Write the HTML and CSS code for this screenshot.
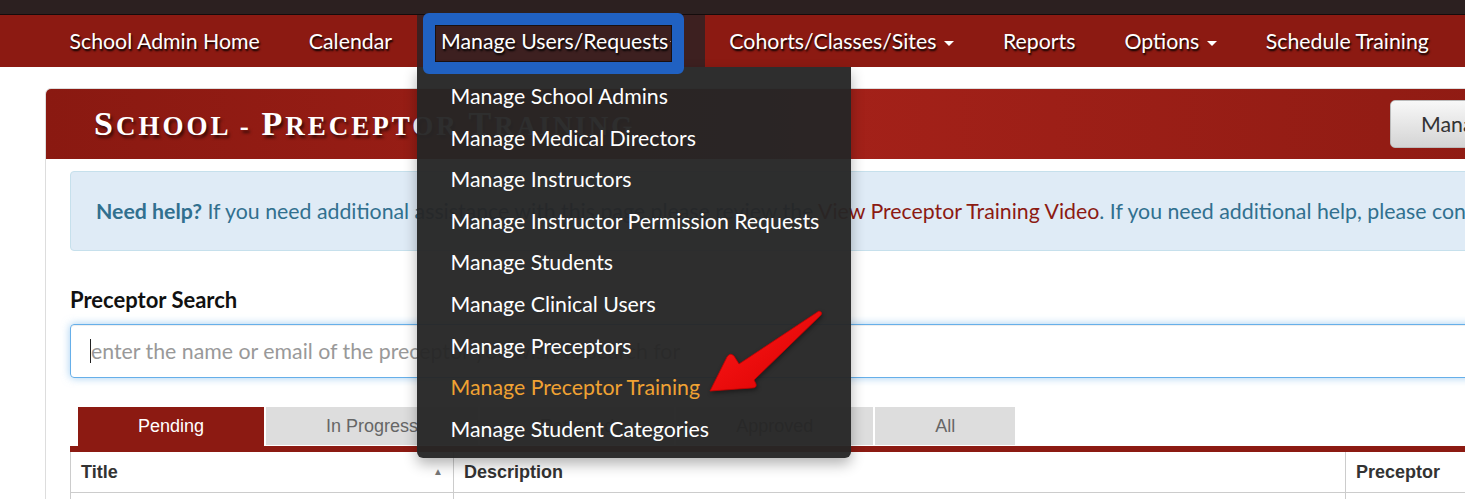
FILE: index.html
```html
<!DOCTYPE html>
<html lang="en">
<head>
    <meta charset="UTF-8">
    <meta name="viewport" content="width=device-width, initial-scale=1.0">
    <title>School - Preceptor Training</title>
    <link rel="stylesheet" href="styles.css">
</head>
<body>
    <div class="topbar"></div>
    <nav class="navbar">
        <ul class="nav">
            <li><a href="#">School Admin Home</a></li>
            <li><a href="#">Calendar</a></li>
            <li class="open">
                <a href="#">Manage Users/Requests<span class="caret"></span></a>
                <ul class="dropdown">
                    <li><a href="#">Manage School Admins</a></li>
                    <li><a href="#">Manage Medical Directors</a></li>
                    <li><a href="#">Manage Instructors</a></li>
                    <li><a href="#">Manage Instructor Permission Requests</a></li>
                    <li><a href="#">Manage Students</a></li>
                    <li><a href="#">Manage Clinical Users</a></li>
                    <li><a href="#">Manage Preceptors</a></li>
                    <li class="current"><a href="#">Manage Preceptor Training</a></li>
                    <li><a href="#">Manage Student Categories</a></li>
                </ul>
            </li>
            <li><a href="#">Cohorts/Classes/Sites <span class="caret"></span></a></li>
            <li><a href="#">Reports</a></li>
            <li><a href="#">Options <span class="caret"></span></a></li>
            <li><a href="#">Schedule Training</a></li>
        </ul>
    </nav>

    <div class="page">
        <div class="panel">
            <div class="panel-head">
                <h1><span class="initial">S</span>chool - <span class="initial">P</span>receptor <span class="initial">T</span>raining</h1>
                <button class="btn">Manage Training Videos</button>
            </div>
            <div class="panel-body">
                <div class="alert">
                    <p><b>Need help?</b> If you need additional assistance with this page please review the <a href="#">View Preceptor Training Video</a>. If you need additional help, please contact support.</p>
                </div>

                <label class="search-label">Preceptor Search</label>
                <div class="search-box">
                    <span class="cursor"></span>
                    <span class="placeholder">enter the name or email of the preceptor you wish to search for</span>
                </div>

                <div class="tabs">
                    <a class="tab active" href="#">Pending</a>
                    <a class="tab" href="#">In Progress</a>
                    <a class="tab" href="#">Returned</a>
                    <a class="tab" href="#">Approved</a>
                    <a class="tab" href="#">All</a>
                </div>

                <table class="grid">
                    <thead>
                        <tr>
                            <th class="col-title">Title <span class="sort">&#9650;</span></th>
                            <th class="col-desc">Description</th>
                            <th>Preceptor</th>
                        </tr>
                    </thead>
                    <tbody>
                        <tr><td></td><td></td><td></td></tr>
                    </tbody>
                </table>
            </div>
        </div>
    </div>

    <!-- callouts -->
    <div class="callout-box"></div>
    <svg class="callout-arrow" width="130" height="100" viewBox="700 300 130 100">
        <defs>
            <linearGradient id="arrowFill" x1="0" y1="0" x2="1" y2="1">
                <stop offset="0" stop-color="#ff1a1a"/>
                <stop offset="1" stop-color="#d80000"/>
            </linearGradient>
        </defs>
        <path d="M819 311 Q823 312 821 315 L754 380 L756 384 Q757 388 752 388 L710 391 L727 357 Q730 352 734 356 L739 364 Z" fill="url(#arrowFill)" stroke="#c40000" stroke-width="0.8" stroke-linejoin="round"/>
    </svg>
</body>
</html>
```

FILE: styles.css
```css
html, body {
    width: 1465px;
    height: 499px;
    overflow: hidden;
}
body {
    margin: 0;
    background-color: #fff;
    font-family: Lato, "Open Sans", sans-serif;
    position: relative;
}
ul {
    list-style: none;
    margin: 0;
    padding: 0;
}
a {
    text-decoration: none;
}

.topbar {
    height: 14px;
    background-color: #2c2020;
    border-bottom: 1px solid #140c0c;
}

/* main menu */
.navbar {
    height: 52px;
    background-color: #8c1a12;
    position: relative;
    z-index: 10;
}
.nav {
    display: flex;
    padding-left: 45px;
    height: 100%;
}
.nav > li {
    position: relative;
}
.nav > li > a {
    display: block;
    line-height: 52px;
    padding: 0 24.5px;
    color: #fff;
    font-size: 21.3px;
    text-shadow: 1px 2px 2px #000;
    white-space: nowrap;
}
.nav > li.open {
    background-color: #3d2020;
}
.caret {
    display: inline-block;
    width: 0;
    height: 0;
    margin-left: 2px;
    vertical-align: middle;
    border-top: 5px solid #fff;
    border-left: 5px solid transparent;
    border-right: 5px solid transparent;
}
.dropdown {
    position: absolute;
    top: 52px;
    left: 0;
    width: 434px;
    padding: 9px 0 8px;
    background-color: rgba(37, 37, 37, 0.96);
    border-radius: 0 0 6px 6px;
    box-shadow: 0 6px 14px rgba(0, 0, 0, 0.3);
}
.dropdown a {
    display: block;
    padding: 0 34px;
    line-height: 41.6px;
    color: #fff;
    font-size: 21.3px;
    white-space: nowrap;
}
.dropdown .current a {
    color: #f0a233;
}

/* content */
.page {
    padding: 21px 0 0 45px;
}
.panel {
    width: 1566px;
    box-sizing: border-box;
    border: 1px solid #ddd;
    border-radius: 6px 6px 0 0;
    background-color: #fff;
}
.panel-head {
    height: 70px;
    display: flex;
    align-items: center;
    padding: 0 20px 0 48px;
    background: linear-gradient(to right, #8a1911, #a42119 50%, #8c1a12);
    border-radius: 5px 5px 0 0;
}
.panel-head h1 {
    margin: 0;
    color: #fff;
    font-family: "Liberation Serif", serif;
    font-size: 27px;
    font-weight: bold;
    text-transform: uppercase;
    letter-spacing: 3px;
    text-shadow: 2px 3px 3px rgba(0, 0, 0, 0.6);
}
.panel-head .initial {
    font-size: 34px;
}
.btn {
    margin-left: auto;
    width: 200px;
    height: 48px;
    padding: 0 0 0 30px;
    text-align: left;
    white-space: nowrap;
    overflow: hidden;
    font-family: Lato, sans-serif;
    font-size: 21.3px;
    color: #333;
    background: linear-gradient(#f8f8f8, #d4d4d4);
    border: 1px solid #bbb;
    border-radius: 5px;
}
.panel-body {
    padding: 12px 24px 0;
}
.alert {
    height: 80px;
    box-sizing: border-box;
    display: flex;
    align-items: center;
    padding: 0 25px;
    background-color: #dfebf6;
    border: 1px solid #c6e0ec;
    border-radius: 4px;
    color: #31708f;
    font-size: 21.3px;
    white-space: nowrap;
}
.alert p {
    margin: 0;
}
.alert a {
    color: #8c1a12;
}
.search-label {
    display: block;
    margin: 37px 0 12px;
    line-height: 24px;
    font-size: 22px;
    font-weight: bold;
    color: #111;
}
.search-box {
    height: 54px;
    box-sizing: border-box;
    display: flex;
    align-items: center;
    padding-left: 19px;
    border: 1px solid #66afe9;
    border-radius: 4px;
    box-shadow: inset 0 1px 1px rgba(0, 0, 0, 0.075), 0 0 8px rgba(102, 175, 233, 0.6);
    font-size: 21.3px;
}
.cursor {
    width: 1px;
    height: 24px;
    background-color: #222;
}
.placeholder {
    color: #999;
}

/* status tabs */
.tabs {
    display: flex;
    align-items: flex-end;
    gap: 2px;
    margin-top: 29px;
    padding-left: 8px;
    border-bottom: 6px solid #8c1a12;
}
.tab {
    height: 38px;
    line-height: 38px;
    margin-bottom: 1px;
    padding: 0 60px;
    background-color: #ddd;
    color: #666;
    font-family: "Liberation Sans", Arial, sans-serif;
    font-size: 18px;
}
.tab.active {
    height: 39px;
    margin-bottom: 0;
    background-color: #8c1a12;
    color: #fff;
}

.grid {
    width: 100%;
    border-collapse: collapse;
    font-family: "Liberation Sans", Arial, sans-serif;
    font-size: 18px;
    color: #333;
}
.grid th, .grid td {
    border: 1px solid #ccc;
    border-top: none;
    height: 40px;
    padding: 0 10px;
    text-align: left;
}
.col-title {
    width: 362px;
    position: relative;
}
.col-desc {
    width: 871px;
}
.sort {
    position: absolute;
    right: 10px;
    top: 14px;
    font-size: 10px;
    color: #777;
}

/* annotation overlays */
.callout-box {
    position: absolute;
    left: 423px;
    top: 13px;
    width: 261px;
    height: 61px;
    box-sizing: border-box;
    border: 12px solid #2061c2;
    border-radius: 6px;
    box-shadow: inset 0 0 0 1px #1a1010;
    z-index: 20;
}
.callout-arrow {
    position: absolute;
    left: 700px;
    top: 300px;
    z-index: 20;
    filter: drop-shadow(1px 2px 2px rgba(0, 0, 0, 0.4));
}
```
